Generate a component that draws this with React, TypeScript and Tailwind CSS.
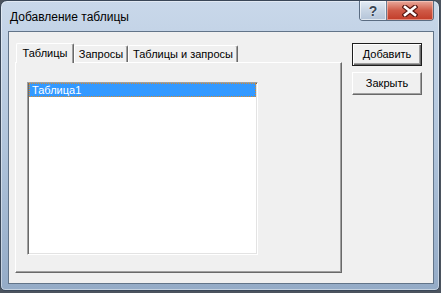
import React from "react";

const F = { fontFamily: '"Liberation Sans", Arial, sans-serif' };

function CloseGlyph() {
  return (
    <svg width="16" height="12" viewBox="0 0 16 12">
      <path d="M3 2 L13 10 M13 2 L3 10" stroke="#5a1a14" strokeWidth="5" strokeLinecap="square" />
      <path d="M3 2 L13 10 M13 2 L3 10" stroke="#ffffff" strokeWidth="2.6" strokeLinecap="square" />
    </svg>
  );
}

export default function App() {
  return (
    <div className="w-[441px] h-[293px] bg-[#4b535e] overflow-hidden" style={F}>
      <div className="w-[440px] h-[291px] rounded-t-[7px] rounded-b-[5px] border border-[#3a4758] bg-gradient-to-b from-[#c9d8ea] via-[#b0c4db] to-[#94abc7] flex flex-col shadow-[inset_0_0_0_1px_rgba(255,255,255,0.45)]">
        {/* title bar */}
        <div className="h-[30px] shrink-0 flex items-start">
          <div className="pl-[9px] pt-[9px] text-[12px] leading-[14px] text-black">Добавление таблицы</div>
          <div className="ml-auto mr-[5px] flex h-[20px] rounded-b-[4px] border border-t-0 border-[#5a6c82] overflow-hidden">
            <div className="w-[27px] h-full flex items-center justify-center bg-gradient-to-b from-[#e4ecf5] via-[#c8d5e4] to-[#b4c4d8] border-r border-[#6b7d93] shadow-[inset_0_0_0_1px_rgba(255,255,255,0.6)]">
              <span className="text-[14px] leading-[14px] font-bold text-[#3b4654] [text-shadow:0_0_2px_#fff]">?</span>
            </div>
            <div className="w-[46px] h-full flex items-center justify-center bg-gradient-to-b from-[#e8a99c] via-[#cf5a47] to-[#c23b27] shadow-[inset_0_0_0_1px_rgba(255,220,210,0.5)]">
              <CloseGlyph />
            </div>
          </div>
        </div>
        {/* client area */}
        <div className="flex-1 ml-[7px] mr-[5px] mb-[6px] border border-[#627489] bg-[#f0f0f0] flex items-start pl-[6px] pt-[11px] text-[11px] text-black">
          {/* tab control */}
          <div className="w-[327px] flex flex-col">
            <div className="h-[19px] flex items-end">
              <div className="relative z-10 -mb-[1px] ml-[1px] w-[58px] h-[20px] bg-[#f0f0f0] rounded-t-[2px] border-l border-t border-r border-l-white border-t-white border-r-[#696969] shadow-[inset_-1px_0_0_#a0a0a0] flex justify-center pt-[3px] leading-[13px]">
                Таблицы
              </div>
              <div className="w-[54px] h-[17px] bg-[#f0f0f0] rounded-t-[2px] border-l border-t border-r border-l-white border-t-white border-r-[#696969] shadow-[inset_-1px_0_0_#a0a0a0] flex justify-center pt-[2px] leading-[13px]">
                Запросы
              </div>
              <div className="w-[110px] h-[17px] bg-[#f0f0f0] rounded-t-[2px] border-l border-t border-r border-l-white border-t-white border-r-[#696969] shadow-[inset_-1px_0_0_#a0a0a0] flex justify-center pt-[2px] leading-[13px]">
                Таблицы и запросы
              </div>
            </div>
            <div className="h-[211px] border border-l-white border-t-white border-r-[#696969] border-b-[#696969] shadow-[inset_-1px_-1px_0_#a0a0a0] pl-[11px] pt-[19px]">
              <div className="w-[231px] h-[173px] bg-white border border-t-[#a0a0a0] border-l-[#a0a0a0] border-r-white border-b-white shadow-[inset_1px_1px_0_#696969,inset_-1px_-1px_0_#e3e3e3] pl-[1px]">
                <div className="h-[14px] mr-[1px] bg-[#3399ff] border border-dotted border-[#d88a2c] text-white leading-[12px] pl-[2px]">
                  Таблица1
                </div>
              </div>
            </div>
          </div>
          {/* buttons */}
          <div className="ml-[10px] flex flex-col gap-[6px]">
            <div className="w-[70px] h-[23px] border border-[#1e1e1e] bg-[#f0f0f0] shadow-[inset_1px_1px_0_#ffffff,inset_-1px_-1px_0_#696969,inset_-2px_-2px_0_#a0a0a0] flex items-center justify-center leading-[13px]">
              Добавить
            </div>
            <div className="w-[70px] h-[23px] border border-t-white border-l-white border-r-[#696969] border-b-[#696969] bg-[#f0f0f0] shadow-[inset_-1px_-1px_0_#a0a0a0] flex items-center justify-center leading-[13px]">
              Закрыть
            </div>
          </div>
        </div>
      </div>
    </div>
  );
}
